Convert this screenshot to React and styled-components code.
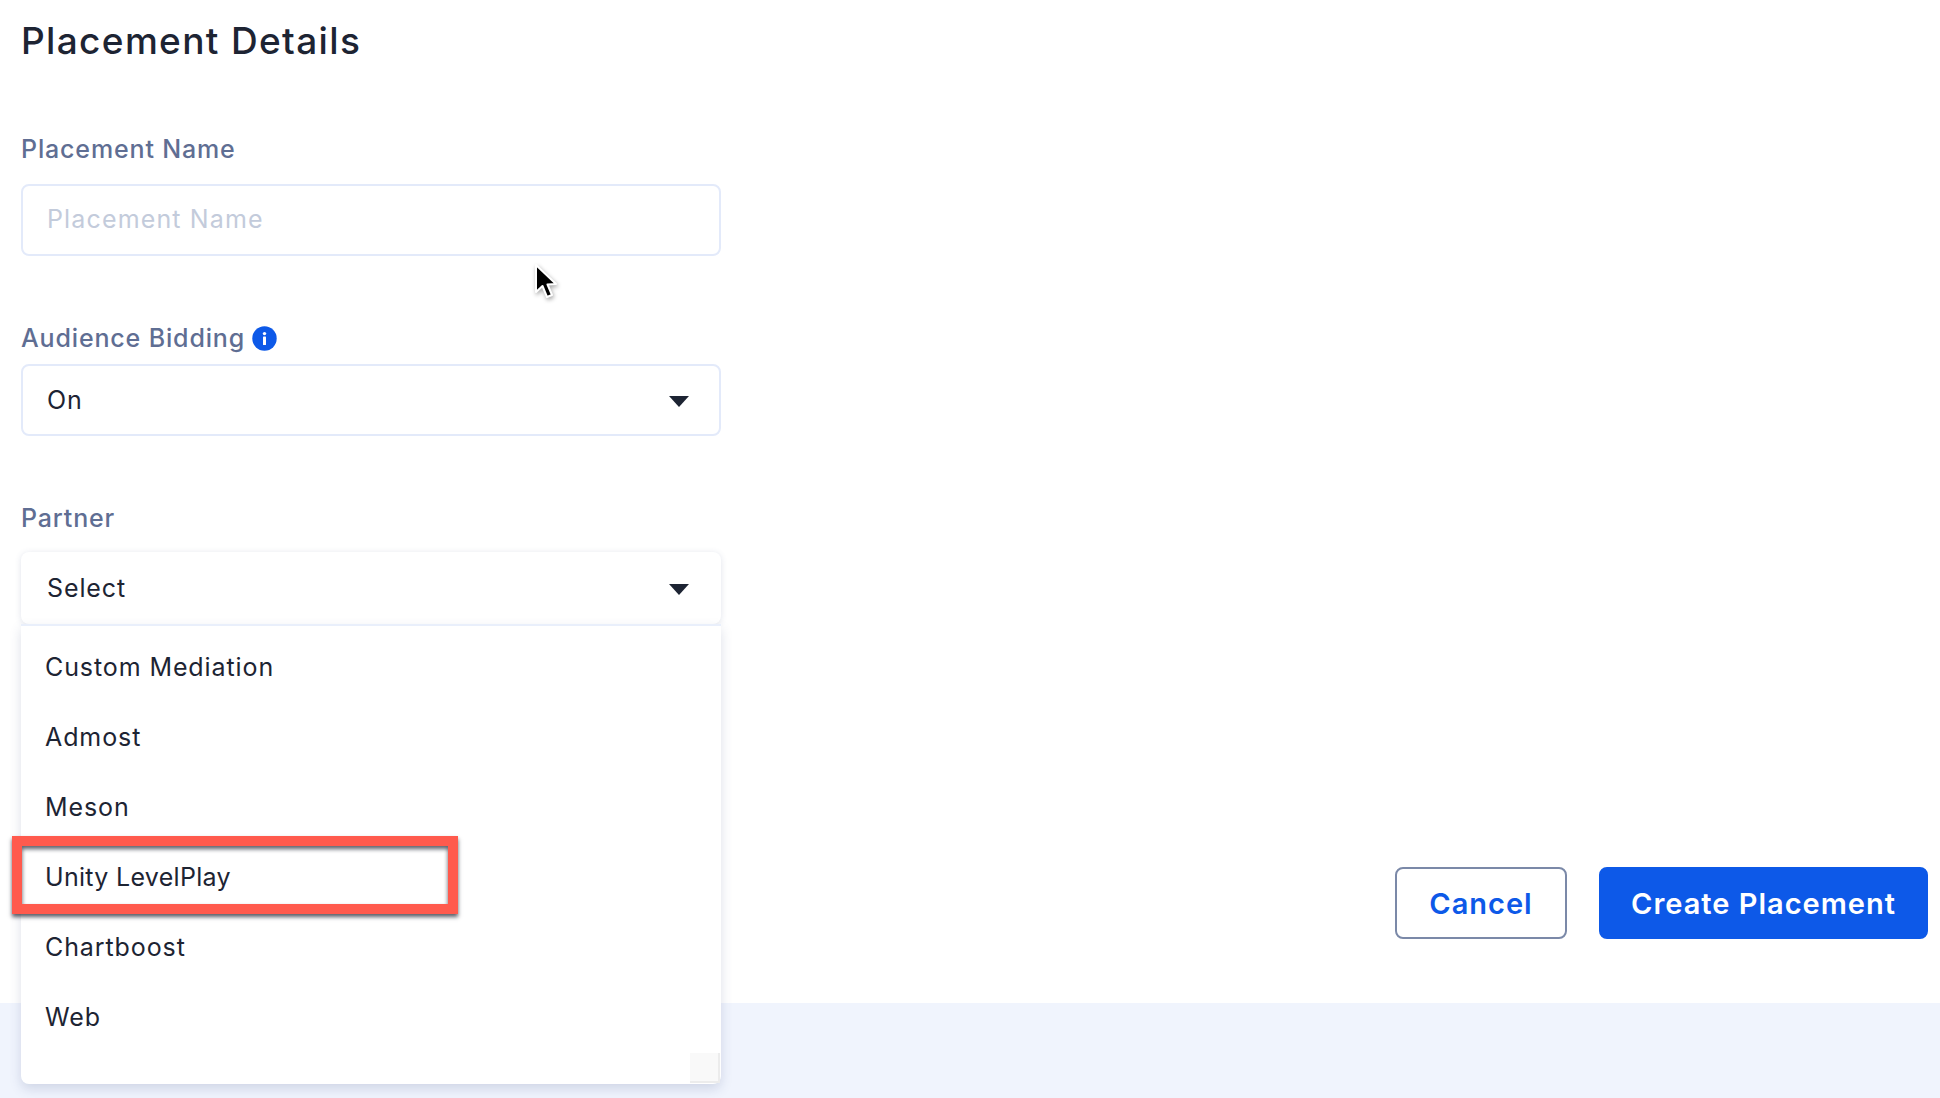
import React from "react";
import styled, { createGlobalStyle } from "styled-components";

const GlobalStyle = createGlobalStyle`
  html, body {
    margin: 0;
    padding: 0;
    background: #ffffff;
    font-family: "Inter", "Liberation Sans", sans-serif;
  }
  * {
    box-sizing: border-box;
  }
`;

const Page = styled.div`
  position: relative;
  width: 1940px;
  height: 1098px;
  overflow: hidden;
  display: flex;
  flex-direction: column;
`;

const Main = styled.main`
  height: 1003px;
  background: #ffffff;
  display: flex;
  justify-content: space-between;
  align-items: flex-end;
  padding: 20px 12px 64px 21px;
`;

const Footer = styled.div`
  flex: 1;
  background: #f0f4fd;
`;

const Form = styled.section`
  align-self: flex-start;
  width: 700px;
`;

const Title = styled.h1`
  margin: 0 0 72px;
  font-size: 37px;
  line-height: 42px;
  font-weight: 500;
  letter-spacing: 1.35px;
  color: #1d2433;
`;

const Field = styled.div`
  position: relative;
  margin-top: 67px;
`;

const Label = styled.label`
  display: flex;
  align-items: center;
  gap: 7px;
  height: 30px;
  margin-bottom: ${(p) => p.$gap}px;
  font-size: 25px;
  font-weight: 500;
  letter-spacing: 0.85px;
  color: #5f6e93;
`;

const Input = styled.input`
  display: block;
  width: 100%;
  height: 72px;
  padding: 0 24px 2px;
  border: 2px solid #e3eafa;
  border-radius: 8px;
  outline: none;
  font-family: inherit;
  font-size: 25px;
  letter-spacing: 1.15px;
  color: #1d2433;
  &::placeholder {
    color: #c3cbdb;
    opacity: 1;
  }
`;

const SelectBox = styled.div`
  display: flex;
  align-items: center;
  justify-content: space-between;
  width: 100%;
  height: 72px;
  border-radius: 8px;
  background: #ffffff;
  font-size: 25px;
  letter-spacing: 0.9px;
  color: #1d2433;
  padding: ${(p) => (p.$open ? "0 32px 0 26px" : "0 30px 0 24px")};
  border: ${(p) => (p.$open ? "none" : "2px solid #e3eafa")};
  box-shadow: ${(p) => (p.$open ? "0 1px 6px rgba(60, 80, 130, 0.16)" : "none")};
`;

const Caret = styled.span`
  width: 0;
  height: 0;
  margin-top: 2px;
  border-left: 10px solid transparent;
  border-right: 10px solid transparent;
  border-top: 11px solid #1d2433;
`;

const Menu = styled.ul`
  position: absolute;
  top: 121px;
  left: 0;
  z-index: 5;
  width: 100%;
  height: 460px;
  margin: 0;
  padding: 6px 0 0;
  list-style: none;
  background: #ffffff;
  border-top: 2px solid #e9effb;
  border-radius: 0 0 8px 8px;
  box-shadow: 0 5px 12px rgba(60, 80, 130, 0.18);
`;

const MenuItem = styled.li`
  position: relative;
  display: flex;
  align-items: center;
  height: 70px;
  padding-left: 24px;
  font-size: 25px;
  letter-spacing: ${(p) => (p.$marked ? "0.3px" : "0.9px")};
  color: #1d2433;
`;

const Highlight = styled.span`
  position: absolute;
  top: -6px;
  left: -9px;
  width: 446px;
  height: 78px;
  border: 10px solid #ff5a4d;
  pointer-events: none;
  box-shadow: 0 3px 4px rgba(20, 25, 40, 0.7), inset 0 3px 4px rgba(20, 25, 40, 0.7);
`;

const Resizer = styled.span`
  position: absolute;
  right: 1px;
  bottom: 1px;
  width: 30px;
  height: 30px;
  background: #f9f9f9;
  border-right: 2px solid #ececec;
  border-bottom: 2px solid #ececec;
`;

const Actions = styled.div`
  display: flex;
  gap: 32px;
`;

const Button = styled.button`
  height: 72px;
  border-radius: 8px;
  font-family: inherit;
  font-size: 29px;
  font-weight: 600;
  letter-spacing: 1px;
  cursor: pointer;
  width: ${(p) => (p.$primary ? "329px" : "172px")};
  color: ${(p) => (p.$primary ? "#ffffff" : "#0d59e8")};
  background: ${(p) => (p.$primary ? "#0d59e8" : "#ffffff")};
  border: 2px solid ${(p) => (p.$primary ? "#0d59e8" : "#7b89a8")};
`;

const Pointer = styled.svg`
  position: absolute;
  top: 262px;
  left: 531px;
  z-index: 6;
  filter: drop-shadow(1px 2px 2px rgba(0, 0, 0, 0.35));
`;

const InfoIcon = () => (
  <svg width="25" height="25" viewBox="0 0 25 25" aria-hidden="true">
    <circle cx="12.5" cy="12.5" r="12.2" fill="#0d59e8" />
    <circle cx="12.5" cy="7.6" r="1.7" fill="#ffffff" />
    <rect x="11" y="10.6" width="3" height="8.4" rx="0.6" fill="#ffffff" />
  </svg>
);

const partners = ["Custom Mediation", "Admost", "Meson", "Unity LevelPlay", "Chartboost", "Web"];

export default function App() {
  return (
    <Page>
      <GlobalStyle />
      <Main>
        <Form>
          <Title>Placement Details</Title>
          <Field>
            <Label $gap={20}>Placement Name</Label>
            <Input placeholder="Placement Name" />
          </Field>
          <Field>
            <Label $gap={11}>
              Audience Bidding
              <InfoIcon />
            </Label>
            <SelectBox>
              On
              <Caret />
            </SelectBox>
          </Field>
          <Field>
            <Label $gap={19}>Partner</Label>
            <SelectBox $open>
              Select
              <Caret />
            </SelectBox>
            <Menu>
              {partners.map((name) => (
                <MenuItem key={name} $marked={name === "Unity LevelPlay"}>
                  {name}
                  {name === "Unity LevelPlay" && <Highlight />}
                </MenuItem>
              ))}
              <Resizer />
            </Menu>
          </Field>
        </Form>
        <Actions>
          <Button>Cancel</Button>
          <Button $primary>Create Placement</Button>
        </Actions>
      </Main>
      <Footer />
      <Pointer width="30" height="40" viewBox="0 0 30 40" aria-hidden="true">
        <path
          d="M5 3 L5 30 L11.5 24 L16 35 L21 33 L16.5 22.5 L25 22 Z"
          fill="#000000"
          stroke="#ffffff"
          strokeWidth="2"
          strokeLinejoin="round"
        />
      </Pointer>
    </Page>
  );
}
